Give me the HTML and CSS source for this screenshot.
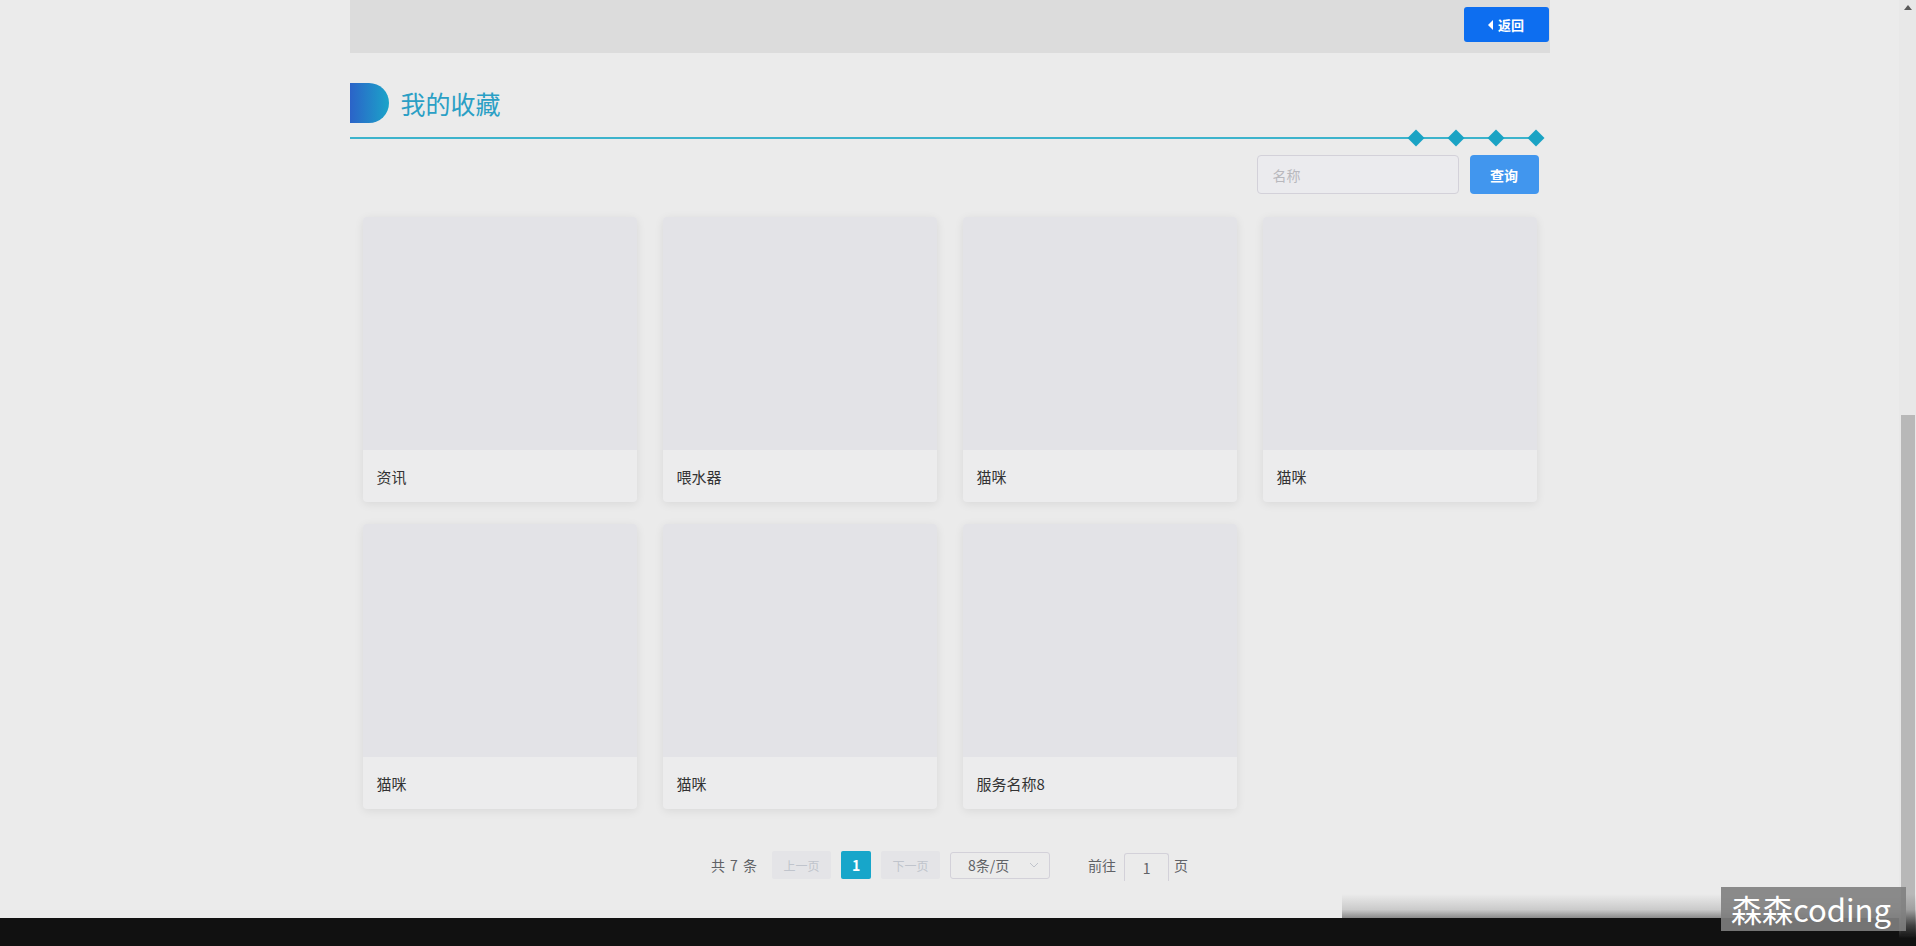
FILE: index.html
```html
<!DOCTYPE html>
<html lang="zh-CN">
<head>
<meta charset="utf-8">
<title>我的收藏</title>
<link rel="stylesheet" href="styles.css">
</head>
<body>
<div class="page">
  <div class="main">
    <div class="container">
      <div class="topbar">
        <button class="back-btn"><span class="caret"></span>返回</button>
      </div>

      <div class="title-row">
        <span class="title-icon"></span>
        <span class="title-text">我的收藏</span>
      </div>
      <div class="divider">
        <span class="diamond"></span>
        <span class="diamond"></span>
        <span class="diamond"></span>
        <span class="diamond"></span>
      </div>

      <div class="search-row">
        <input class="search-input" type="text" placeholder="名称">
        <button class="search-btn">查询</button>
      </div>

      <div class="grid">
        <div class="card"><div class="card-img"></div><div class="card-cap">资讯</div></div>
        <div class="card"><div class="card-img"></div><div class="card-cap">喂水器</div></div>
        <div class="card"><div class="card-img"></div><div class="card-cap">猫咪</div></div>
        <div class="card"><div class="card-img"></div><div class="card-cap">猫咪</div></div>
        <div class="card"><div class="card-img"></div><div class="card-cap">猫咪</div></div>
        <div class="card"><div class="card-img"></div><div class="card-cap">猫咪</div></div>
        <div class="card"><div class="card-img"></div><div class="card-cap">服务名称8</div></div>
      </div>

      <div class="pager">
        <span class="total">共 7 条</span>
        <span class="pg-btn">上一页</span>
        <span class="pg-num">1</span>
        <span class="pg-btn">下一页</span>
        <span class="pg-size">8条/页
          <svg class="chev" width="10" height="6" viewBox="0 0 10 6"><polyline points="1,1 5,5 9,1" fill="none" stroke="#c0c4cc" stroke-width="1"/></svg>
        </span>
        <span class="jump">前往</span>
        <span class="jump-input">1</span>
        <span class="jump-end">页</span>
      </div>
    </div>
    <div class="footer"></div>
  </div>
  <div class="scrollbar">
    <span class="sb-up"></span>
    <span class="sb-thumb"></span>
  </div>

  <div class="fade"></div>
  <div class="watermark">森森coding</div>
</div>
</body>
</html>
```
FILE: styles.css
```css
html, body {
  margin: 0;
  padding: 0;
}
body {
  background: #ebebeb;
  font-family: "Noto Sans CJK SC", "Noto Sans", sans-serif;
  color: #333;
}
.page {
  position: relative;
  display: flex;
  height: 946px;
  overflow: hidden;
}
.main {
  flex: 1;
  display: flex;
  flex-direction: column;
}
.container {
  width: 1200px;
  margin: 0 auto;
  flex: 1;
}
.topbar {
  height: 53px;
  background: #dcdcdc;
  display: flex;
  justify-content: flex-end;
  align-items: flex-start;
  padding-top: 7px;
  box-sizing: border-box;
}
.back-btn {
  width: 85px;
  height: 35px;
  margin-right: 1px;
  border: none;
  border-radius: 3px;
  background: #0d6ef0;
  color: #fff;
  font-family: inherit;
  font-size: 13px;
  font-weight: bold;
  display: flex;
  align-items: center;
  justify-content: center;
  gap: 5px;
  padding: 0;
}
.caret {
  width: 0;
  height: 0;
  border-top: 5px solid transparent;
  border-bottom: 5px solid transparent;
  border-right: 5px solid #fff;
}
.title-row {
  margin-top: 30px;
  height: 40px;
  display: flex;
  align-items: center;
}
.title-icon {
  width: 39px;
  height: 40px;
  border-radius: 0 20px 20px 0;
  background: linear-gradient(to right, #2b63c8, #1ba4c9);
}
.title-text {
  margin-left: 12px;
  font-size: 25px;
  color: #2a9fc5;
  line-height: 40px;
}
.divider {
  margin-top: 14px;
  margin-right: 8px;
  height: 2px;
  background: #3cb3cc;
  display: flex;
  align-items: center;
  justify-content: flex-end;
  gap: 28px;
}
.diamond {
  width: 12px;
  height: 12px;
  background: #1aa3c4;
  transform: rotate(45deg);
  flex: none;
}
.search-row {
  margin-top: 16px;
  display: flex;
  justify-content: flex-end;
  gap: 11px;
  padding-right: 11px;
}
.search-input {
  width: 202px;
  height: 39px;
  box-sizing: border-box;
  border: 1px solid #d3d1d9;
  border-radius: 4px;
  background: #ebebee;
  padding: 0 15px;
  font-family: inherit;
  font-size: 14px;
  outline: none;
}
.search-input::placeholder {
  color: #b8b8bd;
}
.search-btn {
  width: 69px;
  height: 39px;
  border: none;
  border-radius: 4px;
  background: #4196ee;
  color: #fff;
  font-family: inherit;
  font-size: 14px;
  font-weight: bold;
  padding: 0;
}
.grid {
  margin-top: 23px;
  padding: 0 13px;
  display: grid;
  grid-template-columns: repeat(4, 274px);
  column-gap: 26px;
  row-gap: 22px;
}
.card {
  height: 285px;
  border-radius: 4px;
  overflow: hidden;
  background: #ececed;
  box-shadow: 0 2px 10px rgba(0, 0, 0, 0.08);
  display: flex;
  flex-direction: column;
}
.card-img {
  height: 233px;
  background: #e3e3e7;
}
.card-cap {
  flex: 1;
  display: flex;
  align-items: center;
  padding-left: 14px;
  font-size: 15px;
  color: #333;
}
.pager {
  margin-top: 42px;
  display: flex;
  align-items: center;
  justify-content: center;
  font-size: 14px;
  color: #606266;
  height: 28px;
}
.total {
  margin-right: 15px;
  word-spacing: 2px;
}
.pg-btn {
  width: 59px;
  height: 28px;
  background: #e4e4e7;
  color: #c0c4cc;
  font-size: 12px;
  display: flex;
  align-items: center;
  justify-content: center;
  border-radius: 2px;
}
.pg-num {
  width: 30px;
  height: 28px;
  margin: 0 10px;
  background: #17a6ca;
  color: #fff;
  font-size: 14px;
  font-weight: bold;
  display: flex;
  align-items: center;
  justify-content: center;
  border-radius: 2px;
}
.pg-size {
  margin-left: 10px;
  width: 100px;
  height: 27px;
  box-sizing: border-box;
  border: 1px solid #d3d1d9;
  border-radius: 3px;
  display: flex;
  align-items: center;
  padding-left: 17px;
}
.chev {
  margin-left: auto;
  margin-right: 10px;
}
.jump {
  margin-left: 38px;
}
.jump-input {
  margin-left: 8px;
  width: 45px;
  height: 28px;
  box-sizing: border-box;
  border: 1px solid #d3d1d9;
  border-bottom: none;
  border-radius: 3px 3px 0 0;
  display: flex;
  align-items: center;
  justify-content: center;
  margin-top: 4px;
}
.jump-end {
  margin-left: 5px;
}
.footer {
  height: 28px;
  background: #111;
  flex: none;
}
.scrollbar {
  width: 17px;
  flex: none;
  background: #e8e8e8;
  display: flex;
  flex-direction: column;
  align-items: center;
}
.sb-up {
  margin-top: 5px;
  width: 0;
  height: 0;
  border-left: 4px solid transparent;
  border-right: 4px solid transparent;
  border-bottom: 5px solid #5a5a5a;
}
.sb-thumb {
  margin-top: 405px;
  width: 14px;
  height: 520px;
  background: #b8b8b8;
}
.fade {
  position: absolute;
  left: 1342px;
  right: 0;
  bottom: 0;
  height: 52px;
  background: linear-gradient(to bottom, rgba(17, 17, 17, 0) 0%, rgba(17, 17, 17, 0.15) 30%, rgba(17, 17, 17, 0.7) 60%, #111 85%);
}
.watermark {
  position: absolute;
  left: 1721px;
  top: 887px;
  width: 185px;
  height: 44px;
  background: rgba(128, 128, 128, 0.9);
  color: #fff;
  font-size: 31px;
  line-height: 44px;
  padding-left: 10px;
  box-sizing: border-box;
  white-space: nowrap;
  overflow: hidden;
}
```
